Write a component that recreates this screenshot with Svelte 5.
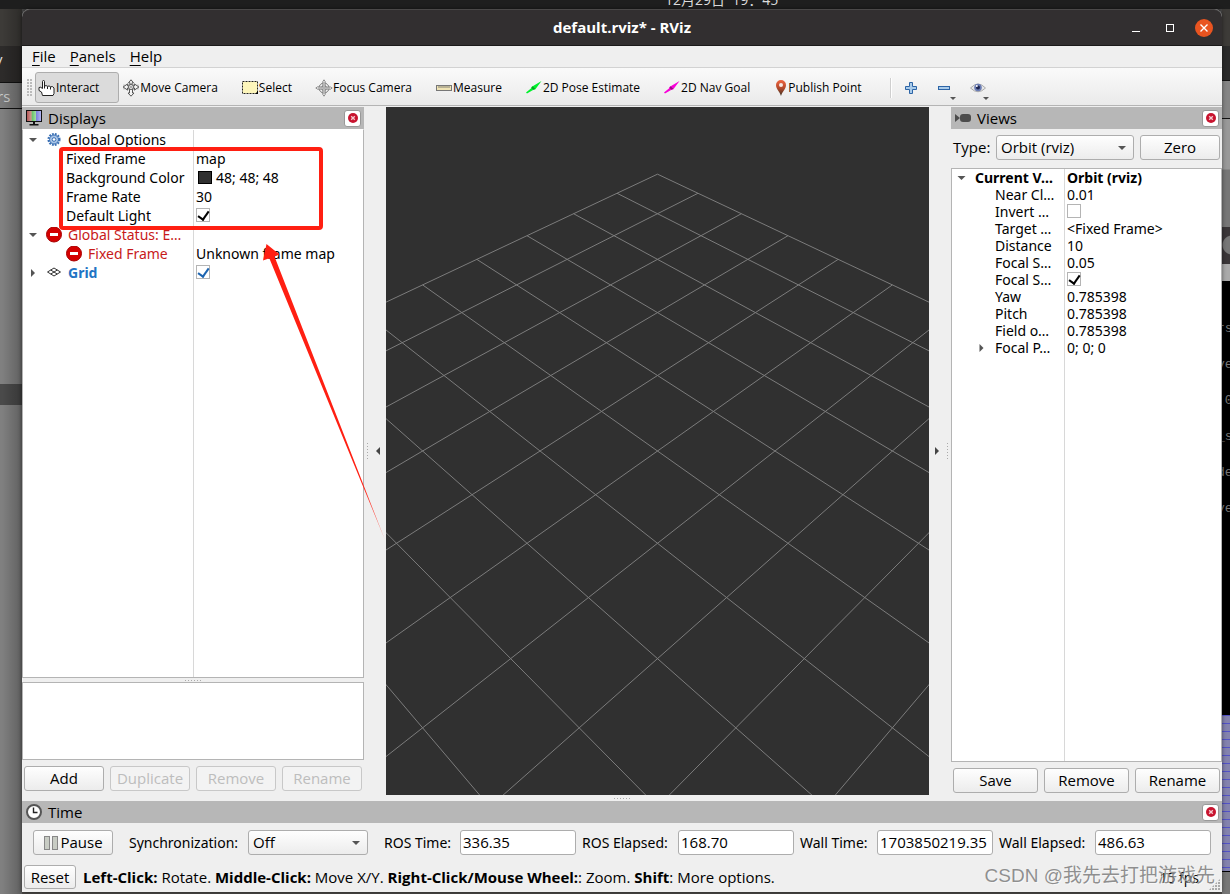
<script>
  const tools = [
    { icon: 'hand', label: 'Interact', active: true },
    { icon: 'move', label: 'Move Camera' },
    { icon: 'select', label: 'Select' },
    { icon: 'focus', label: 'Focus Camera' },
    { icon: 'ruler', label: 'Measure' },
    { icon: 'pose', label: '2D Pose Estimate' },
    { icon: 'goal', label: '2D Nav Goal' },
    { icon: 'pin', label: 'Publish Point' }
  ];

  const displays = [
    { name: 'Global Options', kind: 'group', open: true, icon: 'gear' },
    { name: 'Fixed Frame', kind: 'prop', value: 'map' },
    { name: 'Background Color', kind: 'prop', value: '48; 48; 48', swatch: true },
    { name: 'Frame Rate', kind: 'prop', value: '30' },
    { name: 'Default Light', kind: 'prop', check: true, checked: true },
    { name: 'Global Status: E…', kind: 'group error', open: true, icon: 'stop' },
    { name: 'Fixed Frame', kind: 'nested error', icon: 'stop', value: 'Unknown frame map' },
    { name: 'Grid', kind: 'group display', open: false, icon: 'grid', check: true, checked: true, blue: true }
  ];

  const views = [
    { name: 'Current V…', value: 'Orbit (rviz)', open: true, root: true },
    { name: 'Near Cl…', value: '0.01' },
    { name: 'Invert …', check: true, checked: false },
    { name: 'Target …', value: '<Fixed Frame>' },
    { name: 'Distance', value: '10' },
    { name: 'Focal S…', value: '0.05' },
    { name: 'Focal S…', check: true, checked: true },
    { name: 'Yaw', value: '0.785398' },
    { name: 'Pitch', value: '0.785398' },
    { name: 'Field o…', value: '0.785398' },
    { name: 'Focal P…', value: '0; 0; 0', open: false }
  ];

  const clocks = [
    { id: 'ros-time', label: 'ROS Time:', value: '336.35' },
    { id: 'ros-elapsed', label: 'ROS Elapsed:', value: '168.70' },
    { id: 'wall-time', label: 'Wall Time:', value: '1703850219.35' },
    { id: 'wall-elapsed', label: 'Wall Elapsed:', value: '486.63' }
  ];

  // Ground grid seen from an orbit camera: distance 10, pitch and yaw 45 degrees, 45 degree field of view.
  const focal = 344 / Math.tan(Math.PI / 8);
  function project(x, y) {
    const along = (x + y) / 2;
    const depth = 10 + along;
    return [(focal * (x - y)) / Math.SQRT2 / depth, (-focal * along) / depth];
  }
  const gridLines = [];
  for (let i = -5; i <= 5; i++) {
    gridLines.push([project(i, -5), project(i, 5)]);
    gridLines.push([project(-5, i), project(5, i)]);
  }

  const terminal = ['rs', 've', ' 0', '_s', 'de', 've'];
</script>

{#snippet icon(name)}
  {#if name === 'hand'}
    <svg class="icon" width="18" height="18" viewBox="0 0 18 18"><path d="M4.500 9.500V2.500q0-1 1-1t1 1V7q1.700-1 3 .3 1.700-.8 3 .4 2.800-.7 3.500 1.300v5.500l-1 2H4.500L3.500 13 1 11.500V8.500q1.500-1 3.500 1z" fill="#fff" stroke="#222"/><path d="M6.500 7v2.500M9.500 7.500v2.500M12.500 8v2.500" stroke="#222" fill="none"/></svg>
  {:else if name === 'move'}
    <svg class="icon" width="18" height="18" viewBox="0 0 18 18" fill="#f4f4f4" stroke="#555"><path d="M9 .8l2.500 3H10v3h2.500V5l4.500 3-4.500 3V9H10.500v5H12l-3 3.200L6 14h1.500V9H5.500v2L1 8l4.500-3v1.800H8v-3H6.500z"/><circle cx="9" cy="8" r="2.500"/><path d="M2 5.500v5M16 5.500v5M5 4.500l8 7M13 4.500l-8 7" stroke="#888" stroke-width=".7"/></svg>
  {:else if name === 'select'}
    <svg class="icon" width="18" height="18" viewBox="0 0 18 18"><rect x="1.500" y="2.500" width="15" height="12" fill="#fdf6bb" stroke="#222" stroke-dasharray="2 1"/><path d="M17 12v3h-3z" fill="#000"/></svg>
  {:else if name === 'focus'}
    <svg class="icon" width="18" height="18" viewBox="0 0 18 18" fill="none" stroke="#777"><circle cx="9" cy="9" r="5"/><circle cx="9" cy="9" r="2.500"/><path d="M7.800 8V2.500L9 .8l1.200 1.700V8h5.300L17.200 9l-1.700 1.200h-5.300v5.300L9 17.200l-1.200-1.700v-5.300H2.500L.8 9l1.700-1.200z" fill="#eee" stroke-width=".8"/><path d="M9 3v12M3 9h12" stroke-width=".6"/></svg>
  {:else if name === 'ruler'}
    <svg class="icon" width="18" height="18" viewBox="0 0 18 18"><rect x="1.500" y="6.500" width="15" height="5" fill="#efe3b4" stroke="#777"/><path d="M4 7v2M6 7v2M8 7v2M10 7v2M12 7v2M14 7v2" stroke="#666" stroke-width=".8"/></svg>
  {:else if name === 'pose' || name === 'goal'}
    <svg class="icon" width="18" height="18" viewBox="0 0 18 18" fill={name === 'pose' ? '#00f02c' : '#f800d8'}><path d="M1 13.500l5.200-4.200.2-1.300L16.500 2l-6.300 8.500-1.700.2L2 14.500z"/><path d="M7.500 7.300l2.700 2.500-1.700.9-2-1.700z" fill={name === 'pose' ? '#08a020' : '#90107c'}/></svg>
  {:else if name === 'pin'}
    <svg class="icon pin" width="12" height="18" viewBox="0 0 12 18"><defs><linearGradient id="pin-fill" x2="0" y2="1"><stop offset="0" stop-color="#ef6540"/><stop offset=".5" stop-color="#b64a2c"/><stop offset="1" stop-color="#3c3424"/></linearGradient></defs><path d="M6 1a5 5 0 0 1 5 5c0 4-3.500 6-5 11C4.500 12 1 10 1 6a5 5 0 0 1 5-5z" fill="url(#pin-fill)"/><circle cx="6" cy="6" r="2" fill="#f6e9e4"/></svg>
  {:else if name === 'gear'}
    <svg class="icon" width="16" height="16" viewBox="0 0 16 16"><circle cx="8" cy="7.500" r="5.300" fill="none" stroke="#3b70b4" stroke-width="2.500" stroke-dasharray="1.700 1.100"/><circle cx="8" cy="7.500" r="4.500" fill="#a9c4e6" stroke="#3b70b4"/><circle cx="8" cy="7.500" r="1.800" fill="#fff" stroke="#3b70b4"/></svg>
  {:else if name === 'stop'}
    <svg class="icon" width="16" height="16" viewBox="0 0 16 16"><circle cx="8" cy="7.500" r="7.500" fill="#d40000" stroke="#a80000"/><rect x="4" y="6" width="8" height="3" fill="#fff"/></svg>
  {:else if name === 'grid'}
    <svg class="icon" width="16" height="16" viewBox="0 0 16 16" fill="none" stroke="#333"><path d="M1.500 7L8 3l6.500 4L8 11zM4.700 5l6.500 4M11.300 5l-6.500 4"/></svg>
  {/if}
{/snippet}

{#snippet caret(open)}
  <svg class="caret" width="10" height="10" viewBox="0 0 10 10" fill="#555"><path d={open ? 'M1 3h8L5 7z' : 'M3 1v8l4-4z'}/></svg>
{/snippet}

{#snippet closePanel(name)}
  <button class="close-panel" aria-label="Close {name}">
    <svg width="12" height="12" viewBox="0 0 12 12"><circle cx="6" cy="6" r="5" fill="#c8142f"/><path d="M4.200 4.200l3.600 3.600M7.800 4.200L4.200 7.800" stroke="#f6c8ce" stroke-width="1.400"/></svg>
  </button>
{/snippet}

<div class="desktop">
  <div class="behind top">12月29日&nbsp; 19：45</div>
  <div class="behind left">
    <div class="l-title"></div>
    <div class="l-menu">v</div>
    <div class="l-tabs">rs</div>
    <div class="l-body"></div>
    <div class="l-band"></div>
    <div class="l-rest"></div>
  </div>
  <div class="behind right">
    <div class="r-title"></div>
    <div class="r-menu"></div>
    <div class="r-tabs"></div>
    <div class="r-body"></div>
    <div class="r-bar"></div>
    <div class="r-sub"></div>
    <div class="r-term">
      {#each terminal as line}<pre>{line}</pre>{/each}
    </div>
    <div class="r-plot"></div>
    <div class="r-rest"></div>
  </div>

  <main class="window">
    <header class="titlebar">
      <h1>default.rviz* - RViz</h1>
      <div class="controls">
        <button aria-label="Minimize"><svg width="10" height="10" viewBox="0 0 10 10"><path d="M1 8.500h8" stroke="#fff"/></svg></button>
        <button aria-label="Maximize"><svg width="10" height="10" viewBox="0 0 10 10"><rect x="1.500" y="1.500" width="7" height="7" fill="none" stroke="#fff"/></svg></button>
        <button class="quit" aria-label="Close"><svg width="10" height="10" viewBox="0 0 10 10"><path d="M1.500 1.500l7 7M8.500 1.500l-7 7" stroke="#fff" stroke-width="1.400"/></svg></button>
      </div>
    </header>

    <nav class="menubar">
      <button><u>F</u>ile</button>
      <button><u>P</u>anels</button>
      <button><u>H</u>elp</button>
    </nav>

    <div class="toolbar">
      <span class="handle"></span>
      {#each tools as tool}
        <button class="tool" class:active={tool.active}>{@render icon(tool.icon)}<span>{tool.label}</span></button>
      {/each}
      <span class="separator"></span>
      <button class="mini" aria-label="Add tool">
        <svg width="14" height="14" viewBox="0 0 14 14"><path d="M5.500 1.500h3v4h4v3h-4v4h-3v-4h-4v-3h4z" fill="#a9cbea" stroke="#2c64a6"/></svg>
      </button>
      <button class="mini drop" aria-label="Remove tool">
        <svg width="14" height="14" viewBox="0 0 14 14"><rect x="1.500" y="5.500" width="11" height="3" fill="#a9cbea" stroke="#2c64a6"/></svg>
      </button>
      <button class="mini drop" aria-label="Tool appearance">
        <svg width="16" height="14" viewBox="0 0 16 14"><path d="M.5 7Q8-1 15.500 7 8 14.500.5 7z" fill="#e8e8e8" stroke="#aaa"/><circle cx="8" cy="6.500" r="3.800" fill="#6b7db4"/><circle cx="8" cy="6.500" r="2" fill="#1c2450"/><circle cx="6.800" cy="5" r="1" fill="#fff"/></svg>
      </button>
    </div>

    <div class="workspace">
      <section class="dock">
        <div class="dock-title">
          <svg width="18" height="18" viewBox="0 0 18 18"><defs><linearGradient id="screen"><stop offset="0" stop-color="#b05050"/><stop offset=".33" stop-color="#d49a94"/><stop offset=".34" stop-color="#5fc064"/><stop offset=".64" stop-color="#a5e0a6"/><stop offset=".66" stop-color="#7c80dc"/><stop offset="1" stop-color="#b8baf4"/></linearGradient></defs><rect x="1.500" y="1.500" width="15" height="11" fill="url(#screen)" stroke="#111"/><path d="M8 13h2v2h3.500v1.500h-9V15H8z" fill="#111"/></svg>
          <h2>Displays</h2>
          {@render closePanel('Displays')}
        </div>
        <div class="tree displays">
          <table>
            <tbody>
              {#each displays as row}
                <tr class={row.kind}>
                  <th scope="row"><div class="name">
                    {#if row.open !== undefined}{@render caret(row.open)}{/if}
                    {#if row.icon}{@render icon(row.icon)}{/if}
                    <span>{row.name}</span>
                  </div></th>
                  <td>
                    <div class="value">
                      {#if row.swatch}<span class="swatch"></span>{/if}
                      {#if row.check}<input type="checkbox" class:blue={row.blue} checked={row.checked} aria-label={row.name} />{/if}
                      {row.value ?? ''}
                    </div>
                  </td>
                </tr>
              {/each}
            </tbody>
          </table>
        </div>
        <div class="splitter-row"><i></i></div>
        <div class="help-box"></div>
        <div class="dock-buttons">
          <button>Add</button>
          <button disabled>Duplicate</button>
          <button disabled>Remove</button>
          <button disabled>Rename</button>
        </div>
      </section>

      <div class="splitter left-split"><i></i><button aria-label="Hide left dock"><svg width="6" height="10" viewBox="0 0 6 10"><path d="M5 1v8L1 5z" fill="#444"/></svg></button></div>

      <div class="viewport">
        <svg viewBox="-271.5 -344 543 688" preserveAspectRatio="xMidYMid slice">
          {#each gridLines as [a, b]}
            <line x1={a[0]} y1={a[1]} x2={b[0]} y2={b[1]} />
          {/each}
        </svg>
      </div>

      <div class="splitter right-split"><button aria-label="Hide right dock"><svg width="6" height="10" viewBox="0 0 6 10"><path d="M1 1v8l4-4z" fill="#444"/></svg></button><i></i></div>

      <section class="dock">
        <div class="dock-title">
          <svg width="18" height="18" viewBox="0 0 18 18" fill="#4c4c4c"><path d="M1 5l5 4-5 4z"/><rect x="6" y="5" width="11" height="8" rx="3"/></svg>
          <h2>Views</h2>
          {@render closePanel('Views')}
        </div>
        <div class="view-type">
          <label for="view-type">Type:</label>
          <select id="view-type"><option>Orbit (rviz)</option></select>
          <button>Zero</button>
        </div>
        <div class="tree views">
          <table>
            <tbody>
              {#each views as row}
                <tr class:root={row.root}>
                  <th scope="row"><div class="name">
                    {#if row.open !== undefined}{@render caret(row.open)}{/if}
                    <span>{row.name}</span>
                  </div></th>
                  <td>
                    <div class="value">
                      {#if row.check}<input type="checkbox" checked={row.checked} aria-label={row.name} />{/if}
                      {row.value ?? ''}
                    </div>
                  </td>
                </tr>
              {/each}
            </tbody>
          </table>
        </div>
        <div class="dock-buttons low">
          <button>Save</button>
          <button>Remove</button>
          <button>Rename</button>
        </div>
      </section>
    </div>

    <div class="splitter-row wide"><i></i></div>

    <section class="time">
      <div class="dock-title">
        <svg width="18" height="18" viewBox="0 0 18 18"><circle cx="9" cy="9" r="7" fill="#fff" stroke="#555" stroke-width="2"/><path d="M8.500 4.500v5h4" fill="none" stroke="#222" stroke-width="1.400"/></svg>
        <h2>Time</h2>
        {@render closePanel('Time')}
      </div>
      <div class="time-row">
        <button class="pause"><svg width="16" height="16" viewBox="0 0 16 16" fill="#c8ccc4" stroke="#888"><rect x="1.500" y="1.500" width="5" height="13"/><rect x="9.500" y="1.500" width="5" height="13"/></svg>Pause</button>
        <label class="spaced" for="sync">Synchronization:</label>
        <select id="sync"><option>Off</option></select>
        {#each clocks as clock, i}
          <label class:spaced={i === 0} for={clock.id}>{clock.label}</label>
          <input type="text" id={clock.id} value={clock.value} readonly />
        {/each}
      </div>
    </section>

    <footer class="status">
      <button>Reset</button>
      <p><b>Left-Click:</b> Rotate. <b>Middle-Click:</b> Move X/Y. <b>Right-Click/Mouse Wheel:</b>: Zoom. <b>Shift</b>: More options.</p>
      <span class="fps">15 fps</span>
      <span class="grip"></span>
    </footer>
  </main>

  <svg class="annotation" width="410" height="560" viewBox="0 0 410 560">
    <defs><linearGradient id="fade" gradientUnits="userSpaceOnUse" x1="0" y1="480" x2="0" y2="540"><stop offset="0" stop-color="#ff1f12"/><stop offset="1" stop-color="#ff1f12" stop-opacity=".6"/></linearGradient></defs>
    <rect x="61" y="149" width="260" height="79" rx="2" fill="none" stroke="#ff1f12" stroke-width="4"/>
    <path d="M266.500 244L279.500 254.500 274.500 256.500 385 540 269.300 258.300 263 260.500z" fill="url(#fade)"/>
  </svg>
  <div class="watermark">CSDN @我先去打把游戏先</div>
</div>

<style>
  :global(body) { margin: 0; background: #444; }
  * { box-sizing: border-box; }
  button, input, select { font: inherit; color: inherit; margin: 0; }
  button { padding: 0; border: 0; background: none; }
  h1, h2, p, pre { margin: 0; font-weight: normal; }
  svg { display: block; flex: none; }

  .desktop {
    position: relative;
    display: flex;
    min-height: 100vh;
    padding: 9px 8px 2px 22px;
    overflow: hidden;
    background: linear-gradient(#444, #4a4846);
    font: 15px/19px "Open Sans", "Noto Sans", "Noto Sans CJK SC", sans-serif;
    color: #000;
  }

  /* Whatever shows around the edges of the window */
  .behind { position: absolute; color: #ddd; overflow: hidden; }
  .top { inset: 0 0 auto 0; height: 9px; background: #1e1e1e; padding-left: 665px; line-height: 0; font-size: 14px; white-space: nowrap; }
  .left { left: 0; top: 9px; bottom: 0; width: 22px; display: flex; flex-direction: column; }
  .left::after { content: ""; position: absolute; inset: 0 0 0 auto; width: 20px; background: linear-gradient(90deg, transparent, rgba(0, 0, 0, .25)); }
  .l-title { height: 37px; background: #3d3b38; }
  .l-menu { height: 37px; background: #2d2b2a; border-bottom: 1px solid #111; line-height: 26px; text-indent: -5px; }
  .l-tabs { height: 26px; background: #7b7b7b; border-bottom: 1px solid #111; line-height: 27px; text-indent: -3px; color: #ccc; }
  .l-body { height: 275px; background: #808080; }
  .l-band { height: 21px; background: #4a4a4a; }
  .l-rest { flex: 1; background: #808080; }
  .right { right: 0; top: 9px; bottom: 0; width: 8px; display: flex; flex-direction: column; }
  .r-title { height: 37px; background: #3d3b38; }
  .r-menu { height: 35px; background: #2b2b2b; border-bottom: 1px solid #111; }
  .r-tabs { height: 38px; background: #858585; border-bottom: 1px solid #111; }
  .r-body { height: 108px; background: linear-gradient(#999 50px, #777 51px); }
  .r-bar { height: 37px; background: radial-gradient(circle at 10px 18px, #777 9px, #3a3638 10px); }
  .r-sub { height: 17px; background: #aaa; }
  .r-term { height: 434px; padding-top: 30px; background: #000; color: #777; font: 13px/36px "Liberation Mono", monospace; }
  .r-term pre { font: inherit; text-indent: -5px; }
  .r-plot { height: 156px; background: repeating-linear-gradient(178deg, #5252c8 0 1px, #8483ae 1px 8px); }
  .r-rest { flex: 1; background: #777; border-top: 1px solid #000; }

  .window {
    position: relative;
    flex: 1;
    display: flex;
    flex-direction: column;
    min-width: 0;
    background: #efefef;
    border-radius: 8px 8px 0 0;
    box-shadow: 0 0 4px rgba(0, 0, 0, .5);
  }

  .titlebar {
    display: grid;
    grid-template-columns: 1fr auto 1fr;
    align-items: center;
    height: 37px;
    background: #322f30;
    border-top: 1px solid #4a4848;
    border-bottom: 1px solid #1b1a1a;
    border-radius: 8px 8px 0 0;
    color: #fff;
  }
  .titlebar h1 { grid-column: 2; font-size: 15px; font-weight: bold; }
  .controls { display: flex; justify-content: flex-end; gap: 16px; padding-right: 9px; }
  .controls button { display: grid; place-items: center; width: 18px; height: 18px; border-radius: 50%; }
  .controls .quit { background: #e95420; }

  .menubar { display: flex; gap: 14px; height: 22px; padding: 0 10px; border-bottom: 1px solid #d2d2d2; }
  .menubar u { text-underline-offset: 3px; }

  .toolbar {
    display: flex;
    align-items: center;
    height: 38px;
    padding: 2px 0 0 5px;
    background: linear-gradient(#fafafa, #eaeaea);
    border-bottom: 1px solid #b4b4b4;
    font-size: 12px;
    white-space: nowrap;
  }
  .handle { width: 6px; height: 18px; margin-right: 2px; background: radial-gradient(circle at 1px 1px, #bbb 1px, transparent 1px) 0 0 / 3px 3px; }
  .tool { display: flex; align-items: center; height: 31px; padding: 0 19px 0 2px; border: 1px solid transparent; border-radius: 3px; }
  .tool.active { background: #dbdbdb; border-color: #adadad; }
  .tool .pin { margin: 0 1px 0 2px; }
  .separator { width: 2px; height: 20px; margin: 0 11px 0 8px; background: linear-gradient(90deg, #cfcfcf 1px, #fff 1px); }
  .mini { position: relative; width: 33px; height: 31px; padding-left: 1px; }
  .mini.drop::after { content: ""; position: absolute; left: 14px; bottom: 3px; border: 3px solid transparent; border-top-color: #555; border-bottom: 0; }

  .workspace { flex: 1; display: grid; grid-template-columns: 342px 22px minmax(0, 1fr) 22px 271px; min-height: 600px; padding-top: 1px; }
  .dock { display: flex; flex-direction: column; min-width: 0; }
  .dock-title { display: flex; align-items: center; gap: 5px; height: 22px; padding: 0 3px; background: #b7b7b7; }
  .dock-title h2 { flex: 1; font-size: 15px; }
  .close-panel { display: grid; place-items: center; width: 17px; height: 17px; background: #fff; border: 1px solid #999; border-radius: 3px; }

  .tree { flex: 1; background: #fff; border: 1px solid #b4b4b4; overflow: hidden; font-family: "Noto Sans", "Open Sans", sans-serif; font-size: 14px; }
  .tree table { width: 100%; height: 100%; table-layout: fixed; border-collapse: collapse; }
  .tree tbody { display: block; }
  .tree tr { display: flex; }
  .tree th { flex: none; padding: 0; text-align: left; font-weight: normal; }
  .tree td { flex: 1; padding: 0 0 0 3px; white-space: nowrap; }
  .name, .value { display: flex; align-items: center; white-space: nowrap; }
  .displays { background: linear-gradient(90deg, #fff 170px, #d8d8d8 170px 171px, #fff 171px); border-top-color: #fff; }
  .displays th { width: 170px; }
  .displays .name, .displays .value { height: 19px; }
  .group .name { padding-left: 5px; }
  .group .caret { margin-right: 8px; }
  .group .icon, .nested .icon { margin-right: 6px; }
  .prop .name, .nested .name { padding-left: 43px; }
  .error .name { color: #c81a1a; }
  .display .name { color: #2174c4; font-weight: bold; }
  .swatch { width: 14px; height: 13px; margin: 0 4px 0 2px; background: #303030; border: 1px solid #000; }

  .views { background: linear-gradient(90deg, #fff 112px, #d8d8d8 112px 113px, #fff 113px); }
  .views th { width: 112px; padding-left: 43px; }
  .views .name, .views .value { height: 17px; line-height: 17px; }
  .views .caret { margin: 0 6px 0 -21px; width: 15px; }
  .views .root th { padding-left: 23px; }
  .root, .root th { font-weight: bold; }

  input[type="checkbox"] { appearance: none; width: 14px; height: 14px; margin-bottom: 2px; background: #fff; border: 1px solid #b4b4b4; }
  input[type="checkbox"]:checked::after { content: ""; display: block; width: 5px; height: 9px; margin: 0 0 0 3px; border: solid #000; border-width: 0 2px 2px 0; transform: rotate(35deg); }
  input.blue:checked::after { border-color: #1c64b0; }

  .splitter-row { display: grid; place-items: center; height: 4px; }
  .splitter-row i { width: 17px; height: 1px; background: repeating-linear-gradient(90deg, #aaa 0 1px, transparent 1px 3px); }
  .splitter-row.wide { height: 6px; }
  .help-box { height: 78px; background: #fff; border: 1px solid #b4b4b4; }

  .dock-buttons { display: flex; gap: 6px; padding: 6px 2px 4px; }
  .dock-buttons.low { padding-bottom: 2px; }
  .dock-buttons button { flex: 1; }
  .dock-buttons button, .view-type button, .pause, .status button, select {
    height: 25px;
    border: 1px solid #adadad;
    border-radius: 3px;
    background: linear-gradient(#fefefe, #ececec);
  }
  .dock-buttons button:disabled { color: #bdbdbd; border-color: #c8c8c8; background: #f3f3f3; }

  select {
    appearance: none;
    padding: 0 20px 0 4px;
    background: url("data:image/svg+xml,%3Csvg xmlns='http://www.w3.org/2000/svg' width='8' height='4'%3E%3Cpath d='M0 0h8L4 4z' fill='%23555'/%3E%3C/svg%3E") right 7px center no-repeat, linear-gradient(#fefefe, #ececec);
  }

  .view-type { display: grid; grid-template-columns: 37px 1fr 80px; gap: 6px; align-items: center; padding: 6px 2px 8px; }

  .splitter { display: flex; align-items: center; }
  .splitter i { width: 1px; height: 17px; background: repeating-linear-gradient(#aaa 0 1px, transparent 1px 3px); }
  .left-split { gap: 7px; padding-left: 3px; }
  .right-split { gap: 7px; padding-left: 5px; }

  .viewport { position: relative; background: #303030; }
  .viewport svg { position: absolute; inset: 0; width: 100%; height: 100%; }
  .viewport line { stroke: #7c7c7c; stroke-width: 1; }

  .time-row {
    display: grid;
    grid-template-columns: 80px 123px 120px 80px 1fr 90px 1fr 71px 1fr 90px 1fr;
    gap: 6px;
    align-items: center;
    padding: 7px 11px;
    white-space: nowrap;
  }
  .time-row label { font-family: "Noto Sans", "Open Sans", sans-serif; font-size: 14px; }
  .time-row .spaced { padding-left: 10px; }
  .time-row input { width: 100%; height: 25px; padding: 0 2px 2px; background: #fff; border: 1px solid #adadad; border-radius: 3px; }
  .pause { display: flex; align-items: center; justify-content: center; gap: 1px; }

  .status { position: relative; display: flex; align-items: center; gap: 7px; height: 30px; padding: 0 23px 0 2px; white-space: nowrap; }
  .status button { width: 52px; height: 24px; }
  .status p { flex: 1; font-size: 15px; }
  .fps { font-size: 14px; }
  .grip { position: absolute; right: 2px; bottom: 2px; width: 11px; height: 11px; background: radial-gradient(circle at 1px 1px, #aaa 1px, transparent 1px) 0 0 / 3px 3px; clip-path: polygon(100% 0, 100% 100%, 0 100%); }

  .annotation { position: absolute; left: 0; top: 0; pointer-events: none; }
  .watermark { position: absolute; right: 15px; bottom: 4px; font: 19px/28px "Liberation Sans", "Noto Sans CJK SC", sans-serif; color: rgba(110, 110, 110, .75); text-shadow: 1px 1px 0 rgba(255, 255, 255, .5); white-space: nowrap; pointer-events: none; }
</style>
